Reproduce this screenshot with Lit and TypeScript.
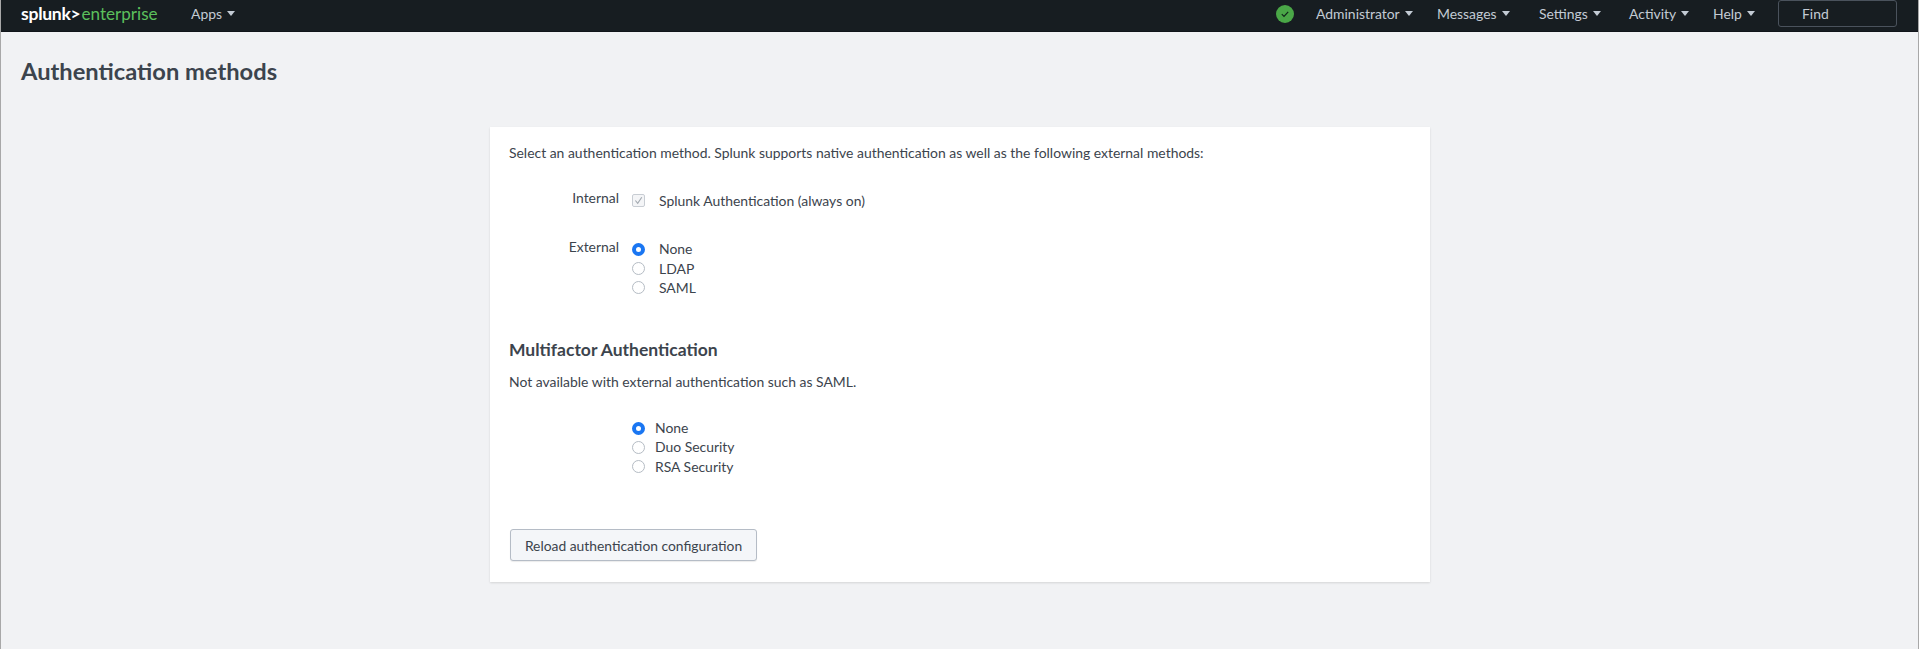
import { LitElement, html, css } from "lit";
import { customElement } from "lit/decorators.js";

@customElement("app-root")
export class AppRoot extends LitElement {
  static styles = css`
    :host {
      display: flex;
      flex-direction: column;
      height: 649px;
      overflow: hidden;
      box-sizing: border-box;
      background: #f1f2f4;
      color: #3c444d;
      font-family: Lato, "Open Sans", "Liberation Sans", sans-serif;
      font-size: 13.93px;
      line-height: 19px;
      border-left: 1px solid #a8a8a8;
      border-right: 1px solid #a8a8a8;
    }
    .bar {
      flex: none;
      height: 32px;
      box-sizing: border-box;
      margin-right: -1px;
      background: #171d21;
      border-bottom: 1px solid #11151a;
      display: flex;
      align-items: flex-start;
      color: #c3cbd4;
      padding-left: 20px;
    }
    .bar-inner { height: 27px; display: flex; align-items: center; }
    .logo { font-size: 17.6px; font-weight: 700; color: #fff; letter-spacing: -0.3px; width: 170px; }
    .logo span { color: #5cc05c; font-weight: 400; font-size: 17.1px; letter-spacing: 0; margin-left: 1px; }
    .spacer { flex: 1; }
    .item { display: flex; align-items: center; gap: 5px; white-space: nowrap; }
    .caret { width: 0; height: 0; border-left: 4px solid transparent; border-right: 4px solid transparent; border-top: 5px solid currentColor; }
    .right { display: flex; align-items: center; height: 27px; }
    .status { width: 18px; height: 18px; display: block; margin-right: 22px; }
    .navs { display: grid; grid-template-columns: 121px 102px 90px 84px 65px; }
    .find {
      box-sizing: border-box; width: 119px; height: 27px; margin-right: 22px;
      border: 1px solid #4a525c; border-radius: 3px;
      padding-left: 23px; display: flex; align-items: center;
    }
    h1 { margin: 0; font-size: 23.7px; line-height: 32px; font-weight: 700; color: #3c444d; padding: 22.5px 0 0 20px; }
    .card {
      box-sizing: border-box; width: 940px; height: 455px; margin: 40.5px 0 0 489px;
      background: #fff; box-shadow: 0 1px 2px rgba(0,0,0,.12);
      padding: 16px 19px; display: flex; flex-direction: column;
    }
    p { margin: 0; }
    .row { display: flex; }
    .row-label { width: 110px; text-align: right; margin-right: 13px; }
    .opts { display: flex; flex-direction: column; }
    .opt { display: flex; align-items: center; height: 19.25px; }
    .opt .t { margin-left: 14px; }
    .mfa .t { margin-left: 10px; }
    .mfa { margin: 27.5px 0 0 123px; }
    .radio { box-sizing: border-box; width: 13px; height: 13px; margin-top: 1px; border-radius: 50%; border: 1px solid #b5bcc4; background: #fff; flex: none; }
    .radio.on { border: 4.5px solid #1a76f2; }
    .check { width: 13px; height: 13px; flex: none; display: block; }
    .internal { margin-top: 26px; }
    .internal .opts { margin-top: 3px; }
    .external { margin-top: 27px; }
    .external .opts { margin-top: 2px; }
    h2 { margin: 40.5px 0 0; font-size: 17.5px; line-height: 24px; font-weight: 700; color: #3c444d; }
    .note { margin-top: 10px; }
    button {
      align-self: flex-start; margin: 53.5px 0 0 1px; box-sizing: border-box; width: 247px; height: 32px;
      border: 1px solid #b5bcc6; border-radius: 3px; background: #f4f6f9; color: #3c444d;
      font: inherit; font-size: 13.85px; padding: 0; box-shadow: 0 1px 1px rgba(0,0,0,.08);
    }
  `;

  private opt(label: string, on = false) {
    return html`<label class="opt"><span class="radio ${on ? "on" : ""}"></span><span class="t">${label}</span></label>`;
  }

  render() {
    const navs = ["Administrator", "Messages", "Settings", "Activity", "Help"];
    return html`
      <header class="bar">
        <div class="bar-inner">
          <div class="logo">splunk&gt;<span>enterprise</span></div>
          <div class="item">Apps <i class="caret"></i></div>
        </div>
        <div class="spacer"></div>
        <div class="right">
          <svg class="status" viewBox="0 0 18 18">
            <circle cx="9" cy="9" r="9" fill="#4aa747"></circle>
            <path d="M5.8 9.2l2.2 2.2 4.2-4.6" fill="none" stroke="#10241a" stroke-width="1.2"></path>
          </svg>
          <div class="navs">
            ${navs.map((n) => html`<div class="item">${n} <i class="caret"></i></div>`)}
          </div>
          <div class="find">Find</div>
        </div>
      </header>
      <h1>Authentication methods</h1>
      <main class="card">
        <p>Select an authentication method. Splunk supports native authentication as well as the following external methods:</p>
        <div class="row internal">
          <div class="row-label">Internal</div>
          <div class="opts">
            <label class="opt">
              <svg class="check" viewBox="0 0 13 13">
                <rect x=".5" y=".5" width="12" height="12" rx="1.5" fill="#f4f5f7" stroke="#c8cdd3"></rect>
                <path d="M3.4 6.5l2.3 2.8L9.8 3.2" fill="none" stroke="#a3a9b0" stroke-width="1.1"></path>
              </svg>
              <span class="t">Splunk Authentication (always on)</span>
            </label>
          </div>
        </div>
        <div class="row external">
          <div class="row-label">External</div>
          <div class="opts">
            ${this.opt("None", true)}${this.opt("LDAP")}${this.opt("SAML")}
          </div>
        </div>
        <h2>Multifactor Authentication</h2>
        <p class="note">Not available with external authentication such as SAML.</p>
        <div class="opts mfa">
          ${this.opt("None", true)}${this.opt("Duo Security")}${this.opt("RSA Security")}
        </div>
        <button>Reload authentication configuration</button>
      </main>
    `;
  }
}
